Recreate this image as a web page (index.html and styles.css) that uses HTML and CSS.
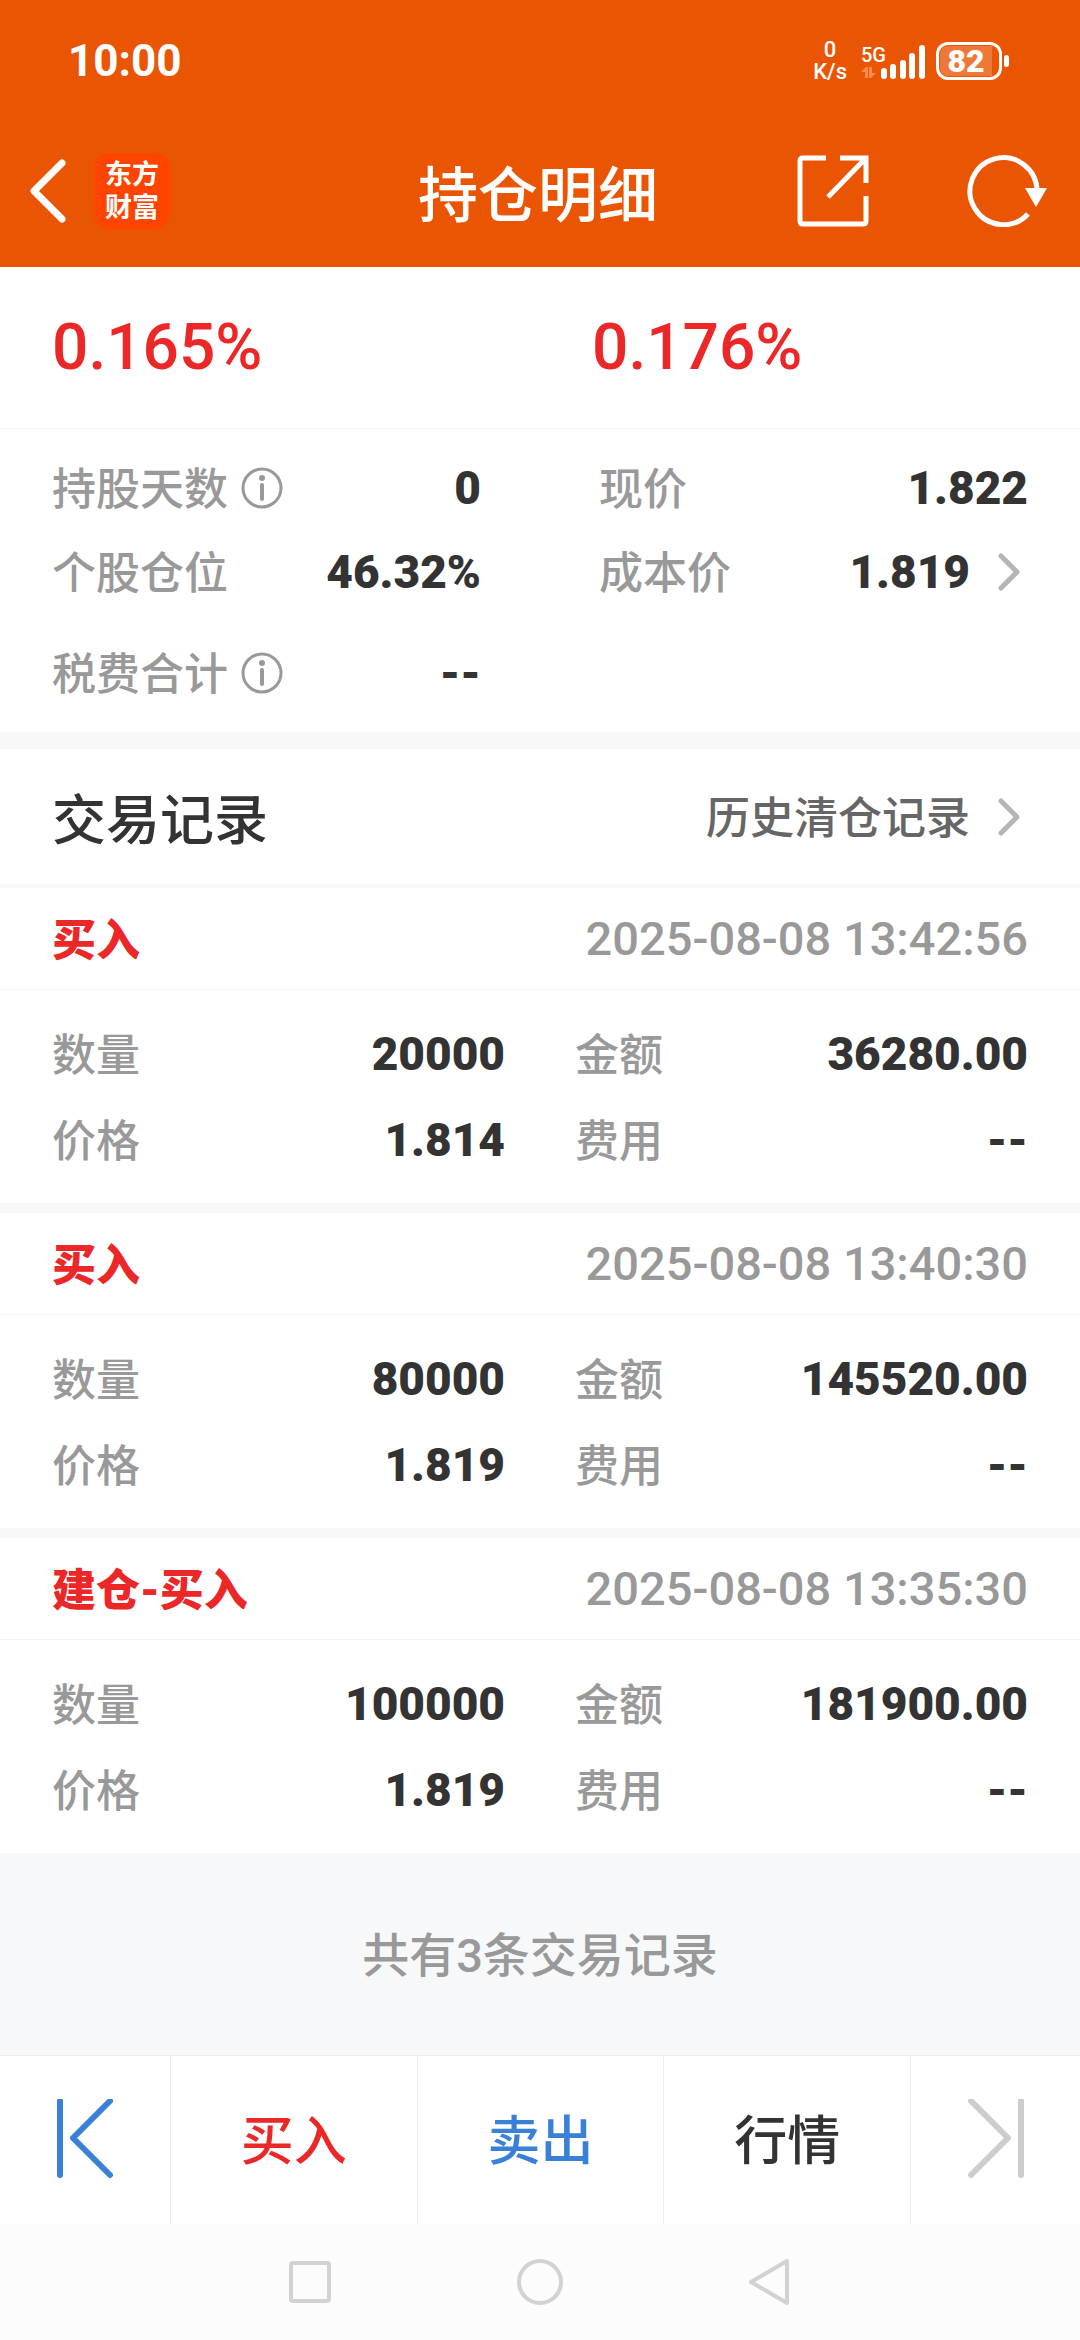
FILE: index.html
```html
<!DOCTYPE html>
<html lang="zh-CN">
<head>
    <meta charset="UTF-8">
    <meta name="viewport" content="width=device-width, initial-scale=1.0">
    <title>持仓明细</title>
    <link rel="stylesheet" href="styles.css">
</head>
<body>
    <header class="header">
        <!-- Status bar -->
        <div class="status">
            <span class="time">10:00</span>
            <div class="status-right">
                <div class="speed"><span>0</span><span>K/s</span></div>
                <div class="network">
                    <div class="network-type">
                        <span>5G</span>
                        <svg width="15" height="12" viewBox="0 0 15 12" fill="#ff8a50">
                            <path d="M0 5L5 0h2v11H4V5zM8 0h3v6h4l-5 5H8z"/>
                        </svg>
                    </div>
                    <svg width="44" height="34" viewBox="0 0 44 34" fill="#fff">
                        <rect x="0" y="23" width="6" height="11" rx="3"/>
                        <rect x="9" y="19" width="6" height="15" rx="3"/>
                        <rect x="19" y="15" width="6" height="19" rx="3"/>
                        <rect x="28" y="8" width="6" height="26" rx="3"/>
                        <rect x="38" y="0" width="6" height="34" rx="3"/>
                    </svg>
                </div>
                <div class="battery"><span class="battery-level">82</span></div>
            </div>
        </div>

        <!-- Title bar -->
        <div class="titlebar">
            <div class="titlebar-left">
                <button class="icon-btn" aria-label="返回">
                    <svg width="38" height="64" viewBox="0 0 38 64" fill="none" stroke="#fff" stroke-width="7" stroke-linecap="round" stroke-linejoin="round">
                        <path d="M33 4L5 32l28 28"/>
                    </svg>
                </button>
                <div class="logo">东方<br>财富</div>
            </div>
            <h1>持仓明细</h1>
            <div class="titlebar-right">
                <button class="icon-btn" aria-label="分享">
                    <svg width="72" height="72" viewBox="0 0 72 72" fill="none" stroke="#fff" stroke-width="5">
                        <path d="M29 3H6Q3 3 3 6v60q0 3 3 3h60q3 0 3-3V41M43 3h26v25M69 3L31 42"/>
                    </svg>
                </button>
                <button class="icon-btn" aria-label="刷新">
                    <svg width="80" height="72" viewBox="0 0 80 72" fill="none" stroke="#fff" stroke-width="5">
                        <path d="M70 36A33.500 33.500 0 1 0 61 59"/>
                        <path d="M58 33h22L69 52z" fill="#fff" stroke="none"/>
                    </svg>
                </button>
            </div>
        </div>
    </header>

    <main>
        <!-- Profit -->
        <section class="profit">
            <div>0.165%</div>
            <div>0.176%</div>
        </section>

        <!-- Position details -->
        <section class="details">
            <div class="item">
                <span class="label">持股天数</span>
                <svg class="info" width="42" height="42" viewBox="0 0 42 42" fill="none" stroke="#999">
                    <circle cx="21" cy="21" r="19" stroke-width="3"/>
                    <path d="M21 18v14" stroke-width="4" stroke-linecap="round"/>
                    <circle cx="21" cy="11" r="3" fill="#999" stroke="none"/>
                </svg>
                <span class="value">0</span>
            </div>
            <div class="item">
                <span class="label">现价</span>
                <span class="value">1.822</span>
            </div>
            <div class="item">
                <span class="label">个股仓位</span>
                <span class="value">46.32%</span>
            </div>
            <a class="item" href="#">
                <span class="label">成本价</span>
                <span class="value">1.819</span>
                <svg class="chevron" width="22" height="38" viewBox="0 0 22 38">
                    <path d="M3 3l16 16L3 35"/>
                </svg>
            </a>
            <div class="item tax">
                <span class="label">税费合计</span>
                <svg class="info" width="42" height="42" viewBox="0 0 42 42" fill="none" stroke="#999">
                    <circle cx="21" cy="21" r="19" stroke-width="3"/>
                    <path d="M21 18v14" stroke-width="4" stroke-linecap="round"/>
                    <circle cx="21" cy="11" r="3" fill="#999" stroke="none"/>
                </svg>
                <span class="value">--</span>
            </div>
        </section>

        <!-- Trade records -->
        <section class="trades">
            <div class="trades-head">
                <h2>交易记录</h2>
                <a class="history" href="#"><span>历史清仓记录</span>
                    <svg class="chevron" width="22" height="38" viewBox="0 0 22 38">
                        <path d="M3 3l16 16L3 35"/>
                    </svg>
                </a>
            </div>

            <article class="record">
                <div class="record-head">
                    <h3>买入</h3>
                    <time>2025-08-08 13:42:56</time>
                </div>
                <div class="record-body">
                    <div class="item"><span class="label">数量</span><span class="value">20000</span></div>
                    <div class="item"><span class="label">金额</span><span class="value">36280.00</span></div>
                    <div class="item"><span class="label">价格</span><span class="value">1.814</span></div>
                    <div class="item"><span class="label">费用</span><span class="value">--</span></div>
                </div>
            </article>

            <article class="record">
                <div class="record-head">
                    <h3>买入</h3>
                    <time>2025-08-08 13:40:30</time>
                </div>
                <div class="record-body">
                    <div class="item"><span class="label">数量</span><span class="value">80000</span></div>
                    <div class="item"><span class="label">金额</span><span class="value">145520.00</span></div>
                    <div class="item"><span class="label">价格</span><span class="value">1.819</span></div>
                    <div class="item"><span class="label">费用</span><span class="value">--</span></div>
                </div>
            </article>

            <article class="record">
                <div class="record-head">
                    <h3>建仓-买入</h3>
                    <time>2025-08-08 13:35:30</time>
                </div>
                <div class="record-body">
                    <div class="item"><span class="label">数量</span><span class="value">100000</span></div>
                    <div class="item"><span class="label">金额</span><span class="value">181900.00</span></div>
                    <div class="item"><span class="label">价格</span><span class="value">1.819</span></div>
                    <div class="item"><span class="label">费用</span><span class="value">--</span></div>
                </div>
            </article>
        </section>

        <p class="total">共有3条交易记录</p>
    </main>

    <!-- Bottom actions -->
    <nav class="actions">
        <button class="edge" aria-label="上一个">
            <svg width="58" height="82" viewBox="0 0 58 82" fill="none" stroke="#3a80d9" stroke-width="6" stroke-linecap="round" stroke-linejoin="round">
                <path d="M4 2v74M54 2L17 39l37 37"/>
            </svg>
        </button>
        <button class="buy">买入</button>
        <button class="sell">卖出</button>
        <button>行情</button>
        <button class="edge" aria-label="下一个">
            <svg width="58" height="82" viewBox="0 0 58 82" fill="none" stroke="#ccc" stroke-width="6" stroke-linecap="round" stroke-linejoin="round">
                <path d="M54 2v74M4 2l37 37L4 76"/>
            </svg>
        </button>
    </nav>

    <!-- System navigation -->
    <nav class="system">
        <button class="icon-btn" aria-label="最近任务">
            <svg width="48" height="48" viewBox="0 0 48 48"><rect x="5" y="5" width="38" height="38" rx="2"/></svg>
        </button>
        <button class="icon-btn" aria-label="主屏幕">
            <svg width="48" height="48" viewBox="0 0 48 48"><circle cx="24" cy="24" r="21"/></svg>
        </button>
        <button class="icon-btn" aria-label="返回上一级">
            <svg width="48" height="48" viewBox="0 0 48 48"><path d="M41 3L5 24l36 21z"/></svg>
        </button>
    </nav>
</body>
</html>
```
FILE: styles.css
```css
* {
    box-sizing: border-box;
}

body {
    margin: 0;
    min-height: 100vh;
    display: flex;
    flex-direction: column;
    background-color: #f7f8fa;
    color: #333;
    font-family: Roboto, "Noto Sans CJK SC", sans-serif;
    font-size: 44px;
    font-weight: 500;
    line-height: 60px;
}

h1, h2, h3, p {
    margin: 0;
}

h1, h2 {
    font-family: "Noto Sans CJK SC", sans-serif;
    font-weight: 500;
}

a {
    color: inherit;
    text-decoration: none;
}

button {
    padding: 0;
    border: none;
    background: none;
    color: inherit;
    font: inherit;
    cursor: pointer;
}

svg {
    display: block;
    flex: none;
}

/* Header */
.header {
    background-color: #ea5504;
    color: #fff;
}

.status {
    display: flex;
    align-items: center;
    justify-content: space-between;
    height: 114px;
    padding: 8px 78px 0 68px;
}

.time {
    font-size: 44px;
    font-weight: 700;
}

.status-right {
    display: flex;
    align-items: center;
}

.speed {
    display: flex;
    flex-direction: column;
    align-items: center;
    margin-right: 14px;
    font-size: 22px;
    line-height: 22px;
}

.network {
    display: flex;
    align-items: flex-end;
    margin-right: 11px;
}

.network-type {
    width: 20px;
    font-size: 20px;
    line-height: 24px;
}

.battery {
    position: relative;
    width: 66px;
    height: 38px;
    padding: 1px;
    border: 3px solid #fff;
    border-radius: 12px;
}

.battery::after {
    content: "";
    position: absolute;
    top: 10px;
    right: -10px;
    width: 5px;
    height: 12px;
    border-radius: 3px;
    background-color: #fff;
}

.battery-level {
    display: block;
    width: 52px;
    border-radius: 8px 0 0 8px;
    background-color: #ee7838;
    font-size: 32px;
    font-weight: 900;
    line-height: 30px;
    text-align: center;
}

.titlebar {
    display: grid;
    grid-template-columns: 1fr auto 1fr;
    align-items: center;
    height: 153px;
    padding: 0 33px 0 29px;
}

.titlebar-left,
.titlebar-right {
    display: flex;
    align-items: center;
}

.titlebar-left {
    gap: 27px;
}

.titlebar-right {
    justify-content: flex-end;
    gap: 98px;
}

.titlebar h1 {
    font-size: 60px;
    line-height: 80px;
}

.logo {
    width: 76px;
    height: 76px;
    padding: 6px 0;
    border-radius: 16px;
    background-color: #ff4400;
    font-size: 27px;
    font-weight: 700;
    line-height: 33px;
    text-align: center;
}

/* Profit */
.profit {
    display: grid;
    grid-template-columns: 1fr 1fr;
    border-bottom: 1px solid #f2f4f7;
    background-color: #fff;
    color: #ec2727;
    font-size: 64px;
    line-height: 161px;
}

.profit div {
    padding-left: 52px;
}

/* Position details */
.details {
    display: grid;
    grid-template-columns: 1fr 1fr;
    column-gap: 118px;
    padding: 17px 52px;
    margin-bottom: 17px;
    background-color: #fff;
}

.item {
    display: flex;
    align-items: center;
    height: 84px;
}

.tax {
    margin-top: 17px;
}

.label {
    padding-top: 4px;
    color: #999;
}

.value {
    margin-left: auto;
    font-size: 46px;
    font-weight: 900;
}

.info {
    margin-left: 13px;
}

.chevron {
    margin: 0 8px 0 28px;
    fill: none;
    stroke: #b5b5b5;
    stroke-width: 5;
    stroke-linecap: round;
    stroke-linejoin: round;
}

/* Trade records */
.trades-head {
    display: flex;
    align-items: center;
    justify-content: space-between;
    height: 139px;
    padding: 0 52px;
    border-bottom: 4px solid #f7f8fa;
    background-color: #fff;
}

.trades-head h2 {
    font-size: 54px;
}

.history {
    display: flex;
    align-items: center;
    color: #666;
}

.history span {
    padding-top: 4px;
}

.record {
    background-color: #fff;
}

.record + .record {
    margin-top: 10px;
}

.record-head {
    display: flex;
    align-items: center;
    justify-content: space-between;
    height: 102px;
    padding: 0 52px;
    border-bottom: 1px solid #f2f4f7;
}

.record-head h3 {
    padding-top: 4px;
    color: #ec2727;
    font-size: 44px;
    font-weight: 900;
}

.record-head time {
    color: #999;
    font-size: 47px;
}

.record-body {
    display: grid;
    grid-template-columns: 1fr 1fr;
    column-gap: 70px;
    padding: 21px 52px 20px;
}

.record-body .item {
    height: 86px;
}

.total {
    padding: 73px 0 69px;
    color: #999;
    font-size: 47px;
    text-align: center;
}

/* Bottom actions */
.actions {
    display: flex;
    height: 169px;
    margin-top: auto;
    border-top: 1px solid #ebedf0;
    background-color: #fff;
    font-size: 53px;
}

.actions button {
    flex: 1;
    padding-top: 4px;
    border-left: 1px solid #ebedf0;
}

.actions .edge {
    display: flex;
    flex: 0 0 170px;
    align-items: center;
    justify-content: center;
    padding-top: 0;
}

.actions .edge:first-child {
    border-left: none;
}

.buy {
    color: #ec2727;
}

.sell {
    color: #3a80d9;
}

/* System navigation */
.system {
    display: flex;
    align-items: center;
    justify-content: center;
    gap: 182px;
    height: 116px;
    background-color: #fcfcfc;
}

.system svg {
    fill: none;
    stroke: #d2d2d2;
    stroke-width: 4;
    stroke-linejoin: round;
}
```
